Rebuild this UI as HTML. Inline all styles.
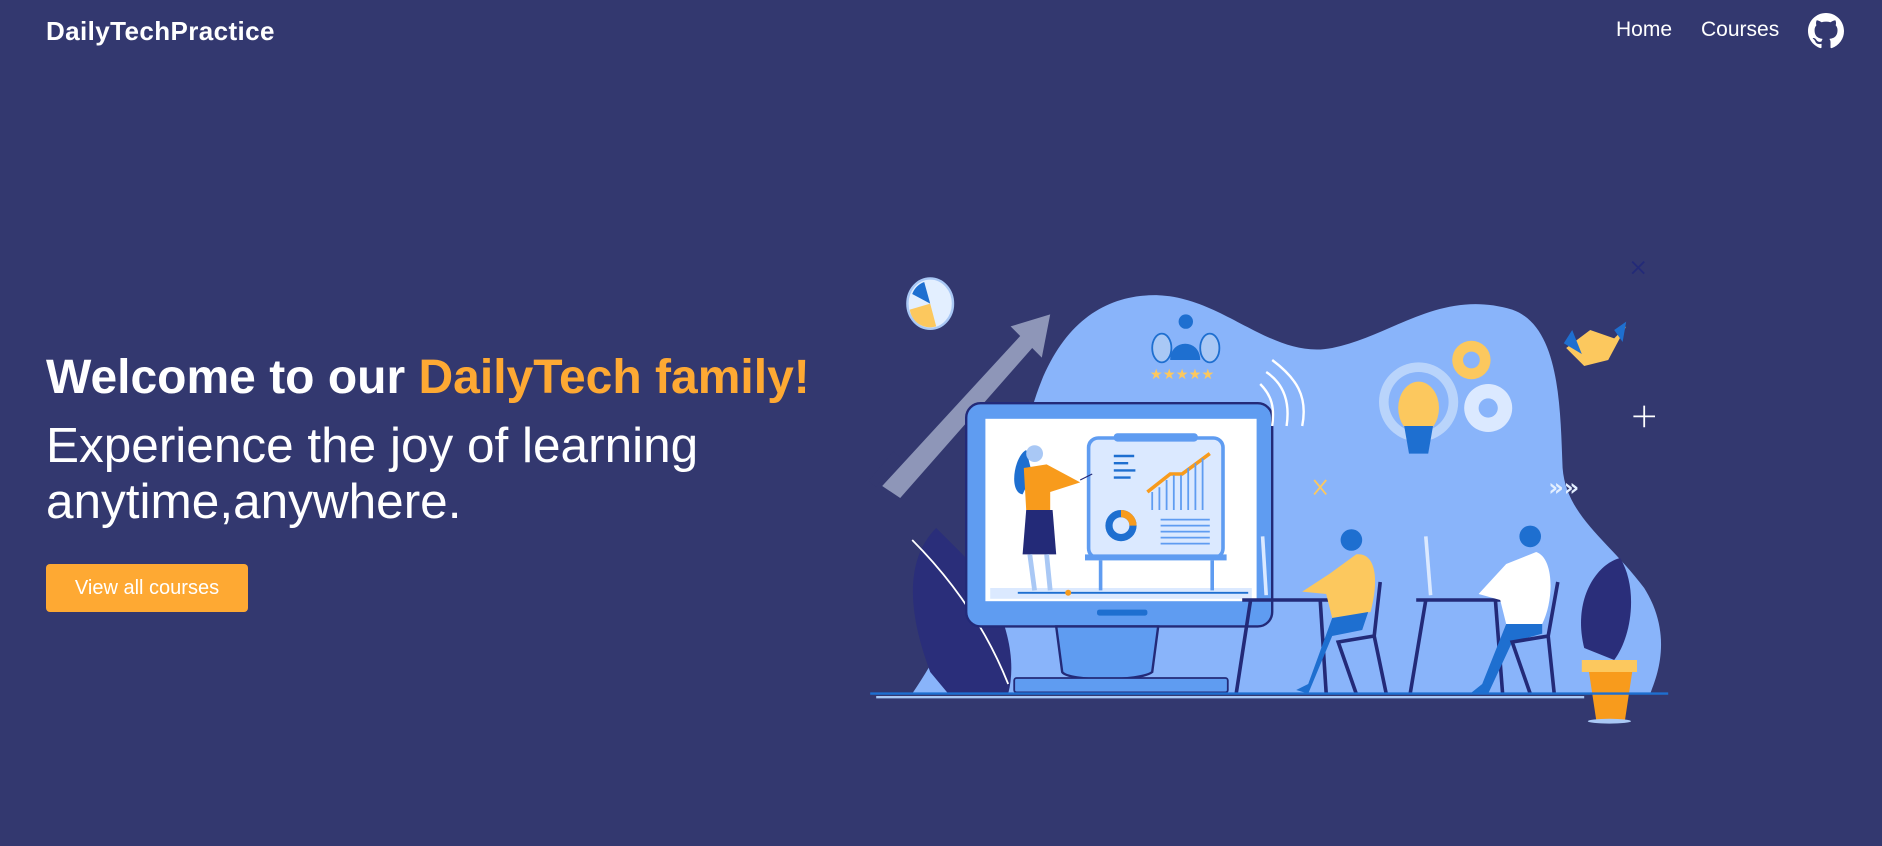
<!DOCTYPE html>
<html><head><meta charset="utf-8"><style>
*{margin:0;padding:0;box-sizing:border-box}
body{width:1882px;height:846px;background:#33386f;font-family:"Liberation Sans",sans-serif;color:#fff;position:relative;overflow:hidden}
.logo{position:absolute;left:46px;top:16px;font-size:26px;font-weight:bold;letter-spacing:0.4px}
.nav{position:absolute;top:18px;font-size:21px}
h1{position:absolute;left:46px;top:350px;font-size:48px;font-weight:bold;white-space:nowrap}
h1 span{color:#fea933}
.sub{position:absolute;left:46px;top:418px;font-size:49.5px;font-weight:300;line-height:56px;white-space:nowrap}
.btn{position:absolute;left:46px;top:564px;width:202px;height:48px;background:#fea933;border-radius:4px;font-size:20px;text-align:center;line-height:48px}
svg.ill{position:absolute;left:0;top:0}
</style></head><body>
<div class="logo">DailyTechPractice</div>
<div class="nav" style="left:1616px">Home</div>
<div class="nav" style="left:1701px">Courses</div>
<svg style="position:absolute;left:1808px;top:13px" width="36" height="36" viewBox="0 0 16 16"><path fill="#fff" d="M8 0C3.58 0 0 3.58 0 8c0 3.54 2.29 6.53 5.47 7.59.4.07.55-.17.55-.38 0-.19-.01-.82-.01-1.49-2.01.37-2.53-.49-2.69-.94-.09-.23-.48-.94-.82-1.13-.28-.15-.68-.52-.01-.53.63-.01 1.08.58 1.23.82.72 1.21 1.87.87 2.33.66.07-.52.28-.87.51-1.07-1.78-.2-3.64-.89-3.64-3.95 0-.87.31-1.59.82-2.15-.08-.2-.36-1.02.08-2.12 0 0 .67-.21 2.2.82.64-.18 1.32-.27 2-.27.68 0 1.36.09 2 .27 1.53-1.04 2.2-.82 2.2-.82.44 1.1.16 1.92.08 2.12.51.56.82 1.27.82 2.15 0 3.07-1.87 3.75-3.65 3.95.29.25.54.73.54 1.48 0 1.07-.01 1.93-.01 2.2 0 .21.15.46.55.38A8.013 8.013 0 0016 8c0-4.42-3.58-8-8-8z"/></svg>
<h1>Welcome to our <span>DailyTech family!</span></h1>
<div class="sub">Experience the joy of learning<br>anytime,anywhere.</div>
<div class="btn">View all courses</div>

<svg class="ill" width="1882" height="846" viewBox="0 0 1568 705">
<path d="M760 578 C800 520 840 420 860 340 C880 270 920 245 965 246 C1020 248 1060 300 1110 290 C1160 280 1200 240 1260 258 C1300 272 1300 340 1302 390 C1305 430 1340 450 1370 490 C1395 530 1380 565 1375 578 Z" fill="#89b4fa"/>
<path d="M735 405 L850 280 L842 272 L875 262 L868 298 L860 290 L750 415 Z" fill="#8e96b8"/>
<rect x="733" y="375" width="8" height="32" fill="#33386f" transform="rotate(40 737 391)"/>
<ellipse cx="775" cy="253" rx="19" ry="21" fill="#e3efff" stroke="#a9c8f5" stroke-width="2"/>
<path d="M775 253 L760 245 A17 17 0 0 1 770 235 Z" fill="#1e6fd0"/>
<path d="M775 253 L758 258 A17 17 0 0 0 780 272 Z" fill="#fcc85e"/>
<path d="M780 440 C750 470 760 520 775 560 L790 578 L840 578 C850 540 830 490 800 460 Z" fill="#2a2e7a"/>
<path d="M760 450 C790 480 820 520 840 570" stroke="#fff" stroke-width="1.5" fill="none"/>
<path d="M1320 540 C1310 500 1330 470 1350 465 C1365 490 1360 530 1345 550 Z" fill="#2a2e7a"/>
<rect x="805" y="336" width="255" height="186" rx="12" fill="#5f9cf1" stroke="#232a78" stroke-width="2"/>
<rect x="821" y="349" width="226" height="152" fill="#fff"/>
<path d="M880 522 L965 522 L960 560 C950 568 890 568 885 560 Z" fill="#5f9cf1" stroke="#232a78" stroke-width="2"/>
<rect x="845" y="565" width="178" height="12" rx="2" fill="#5f9cf1" stroke="#232a78" stroke-width="1.5"/>
<rect x="914" y="508" width="42" height="5" rx="2" fill="#1e6fd0"/>
<rect x="825" y="490" width="218" height="9" fill="#dbe9ff"/>
<line x1="848" y1="494" x2="1040" y2="494" stroke="#1e6fd0" stroke-width="1.5"/>
<circle cx="890" cy="494" r="2.5" fill="#f89b1c"/>
<rect x="907" y="365" width="112" height="100" rx="8" fill="#dbe9ff" stroke="#5f9cf1" stroke-width="3"/>
<rect x="928" y="361" width="70" height="7" rx="3" fill="#5f9cf1"/>
<rect x="904" y="462" width="118" height="5" fill="#5f9cf1"/>
<line x1="917" y1="467" x2="917" y2="492" stroke="#5f9cf1" stroke-width="3"/>
<line x1="1010" y1="467" x2="1010" y2="492" stroke="#5f9cf1" stroke-width="3"/>
<path d="M956 410 L975 395 L985 395 L1008 378" stroke="#f89b1c" stroke-width="3" fill="none"/>
<g stroke="#5f9cf1" stroke-width="1.5"><line x1="960" y1="425" x2="960" y2="410"/><line x1="966" y1="425" x2="966" y2="406"/><line x1="972" y1="425" x2="972" y2="400"/><line x1="978" y1="425" x2="978" y2="396"/><line x1="984" y1="425" x2="984" y2="396"/><line x1="990" y1="425" x2="990" y2="390"/><line x1="996" y1="425" x2="996" y2="386"/><line x1="1002" y1="425" x2="1002" y2="382"/></g>
<g stroke="#5f9cf1" stroke-width="1.5"><line x1="967" y1="433" x2="1008" y2="433"/><line x1="967" y1="438" x2="1008" y2="438"/><line x1="967" y1="443" x2="1008" y2="443"/><line x1="967" y1="448" x2="1008" y2="448"/><line x1="967" y1="453" x2="1008" y2="453"/></g>
<circle cx="934" cy="438" r="10" fill="none" stroke="#1e6fd0" stroke-width="6"/>
<path d="M934 428 A10 10 0 0 1 944 438" stroke="#f89b1c" stroke-width="6" fill="none"/>
<g stroke="#1e6fd0" stroke-width="2"><line x1="928" y1="380" x2="945" y2="380"/><line x1="928" y1="386" x2="940" y2="386"/><line x1="928" y1="392" x2="946" y2="392"/><line x1="928" y1="398" x2="942" y2="398"/></g>
<path d="M855 375 C845 380 840 410 852 412 L860 395 Z" fill="#1e6fd0"/>
<path d="M853 390 L872 387 L900 402 L875 410 L875 425 L855 425 Z" fill="#f89b1c"/>
<circle cx="862" cy="378" r="7" fill="#a9c8f5"/>
<path d="M855 425 L877 425 L880 462 L852 462 Z" fill="#232a78"/>
<path d="M858 462 L862 492 M872 462 L875 492" stroke="#a9c8f5" stroke-width="4"/>
<line x1="900" y1="400" x2="910" y2="395" stroke="#232a78" stroke-width="1"/>
<path d="M1060 300 C1080 315 1090 330 1085 355 M1055 310 C1070 320 1075 335 1072 355 M1050 320 C1060 330 1062 340 1060 355" stroke="#fff" stroke-width="2" fill="none"/>
<g fill="#a9c8f5" stroke="#1e6fd0" stroke-width="1.5"><ellipse cx="968" cy="290" rx="8" ry="12"/><ellipse cx="1008" cy="290" rx="8" ry="12"/></g>
<path d="M975 300 C975 282 1000 282 1000 300 Z" fill="#1e6fd0"/><circle cx="988" cy="268" r="6" fill="#1e6fd0"/>
<text x="958" y="316" font-size="12" fill="#fcc85e" font-family="DejaVu Sans">★★★★★</text>
<circle cx="1182" cy="335" r="33" fill="#b9d4fb"/><circle cx="1182" cy="335" r="25" fill="#89b4fa"/>
<circle cx="1240" cy="340" r="20" fill="#dbe9ff"/><circle cx="1240" cy="340" r="8" fill="#89b4fa"/>
<circle cx="1226" cy="300" r="16" fill="#fcc85e"/><circle cx="1226" cy="300" r="7" fill="#89b4fa"/>
<ellipse cx="1182" cy="340" rx="17" ry="22" fill="#fcc85e"/>
<path d="M1170 355 L1194 355 L1190 378 L1174 378 Z" fill="#1e6fd0"/>
<path d="M1305 290 L1325 275 L1345 282 L1355 272 L1340 300 L1320 305 Z" fill="#fcc85e"/>
<path d="M1303 286 L1310 275 L1318 295 Z" fill="#1e6fd0"/><path d="M1345 275 L1355 268 L1352 285 Z" fill="#1e6fd0"/>
<path d="M1370 338 V356 M1361 347 H1379" stroke="#fff" stroke-width="1.5"/>
<path d="M1360 218 L1370 228 M1370 218 L1360 228" stroke="#232a78" stroke-width="1.5"/>
<text x="1290" y="413" font-size="20" font-weight="bold" fill="#e3efff" font-family="DejaVu Sans">»»</text>
<path d="M1095 400 L1105 412 M1105 400 L1095 412" stroke="#fcc85e" stroke-width="1.5"/>
<g stroke="#232a78" stroke-width="3" fill="none">
<line x1="1035" y1="500" x2="1108" y2="500"/><line x1="1042" y1="500" x2="1030" y2="578"/><line x1="1100" y1="500" x2="1105" y2="578"/>
<line x1="1180" y1="500" x2="1253" y2="500"/><line x1="1188" y1="500" x2="1175" y2="578"/><line x1="1246" y1="500" x2="1252" y2="578"/>
</g>
<line x1="1052" y1="447" x2="1055" y2="496" stroke="#dbe9ff" stroke-width="3"/>
<line x1="1188" y1="447" x2="1192" y2="496" stroke="#dbe9ff" stroke-width="3"/>
<path d="M1108 478 L1130 462 C1145 460 1150 480 1142 510 L1110 515 L1105 495 L1085 493 Z" fill="#fcc85e"/>
<circle cx="1126" cy="450" r="9" fill="#1e6fd0"/>
<path d="M1140 510 L1110 515 L1090 570 L1080 575 L1090 578 L1110 530 L1135 525 Z" fill="#1e6fd0"/>
<path d="M1150 485 L1145 530 L1115 535 L1130 578 M1145 530 L1155 578" stroke="#232a78" stroke-width="3" fill="none"/>
<path d="M1255 470 L1280 460 C1295 465 1295 500 1285 520 L1255 520 L1250 500 L1232 495 Z" fill="#fff"/>
<circle cx="1275" cy="447" r="9" fill="#1e6fd0"/>
<path d="M1285 520 L1255 520 L1235 570 L1225 578 L1240 578 L1260 535 L1285 528 Z" fill="#1e6fd0"/>
<path d="M1298 485 L1290 530 L1260 535 L1275 578 M1290 530 L1295 578" stroke="#232a78" stroke-width="3" fill="none"/>
<path d="M1318 550 L1364 550 L1360 560 L1354 600 L1330 600 L1324 560 Z" fill="#f89b1c"/>
<rect x="1318" y="550" width="46" height="10" fill="#fcc85e"/>
<ellipse cx="1341" cy="601" rx="18" ry="2" fill="#a9c8f5"/>
<line x1="725" y1="578" x2="1390" y2="578" stroke="#1e6fd0" stroke-width="2"/>
<line x1="730" y1="581" x2="1320" y2="581" stroke="#a9c8f5" stroke-width="2"/>
</svg>
</body></html>
